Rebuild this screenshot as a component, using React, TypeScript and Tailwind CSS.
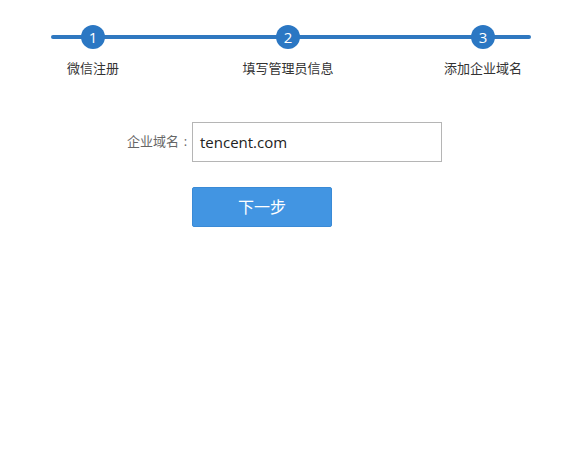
import React from 'react';

const steps = ['微信注册', '填写管理员信息', '添加企业域名'];

const font = { fontFamily: '"Open Sans", "Noto Sans CJK SC", sans-serif' };

export default function App() {
  return (
    <div
      className="w-[579px] h-[476px] bg-white text-[#333]"
      style={font}
    >
      <div className="pt-[25px]">
        <div className="relative ml-[33px] w-[510px] flex justify-between">
          <div className="absolute left-[18px] right-[12px] top-[10px] h-[4px] bg-[#2f78c0] rounded-full" />
          {steps.map((label, i) => (
            <div key={label} className="relative w-[120px] flex flex-col items-center">
              <div className="w-[24px] h-[24px] rounded-full bg-[#2b77c3] text-white text-[15px] leading-[24px] text-center">
                {i + 1}
              </div>
              <div className="mt-[9px] text-[13px] leading-[20px] text-[#333] whitespace-nowrap">
                {label}
              </div>
            </div>
          ))}
        </div>
      </div>

      <div className="mt-[44px] flex items-center pl-[127px]">
        <span className="w-[65px] text-[13px] text-[#666] whitespace-nowrap">
          企业域名<span className="inline-block w-[13px] text-center">:</span>
        </span>
        <div className="w-[250px] h-[40px] border border-[#b5b5b5] flex items-center px-[7px] text-[15px] text-[#222]">
          tencent.com
        </div>
      </div>

      <div className="mt-[25px] pl-[192px]">
        <button className="w-[140px] h-[40px] rounded-[2px] bg-[#4295e2] border border-[#3a8ad6] text-white text-[16px]">
          下一步
        </button>
      </div>
    </div>
  );
}
